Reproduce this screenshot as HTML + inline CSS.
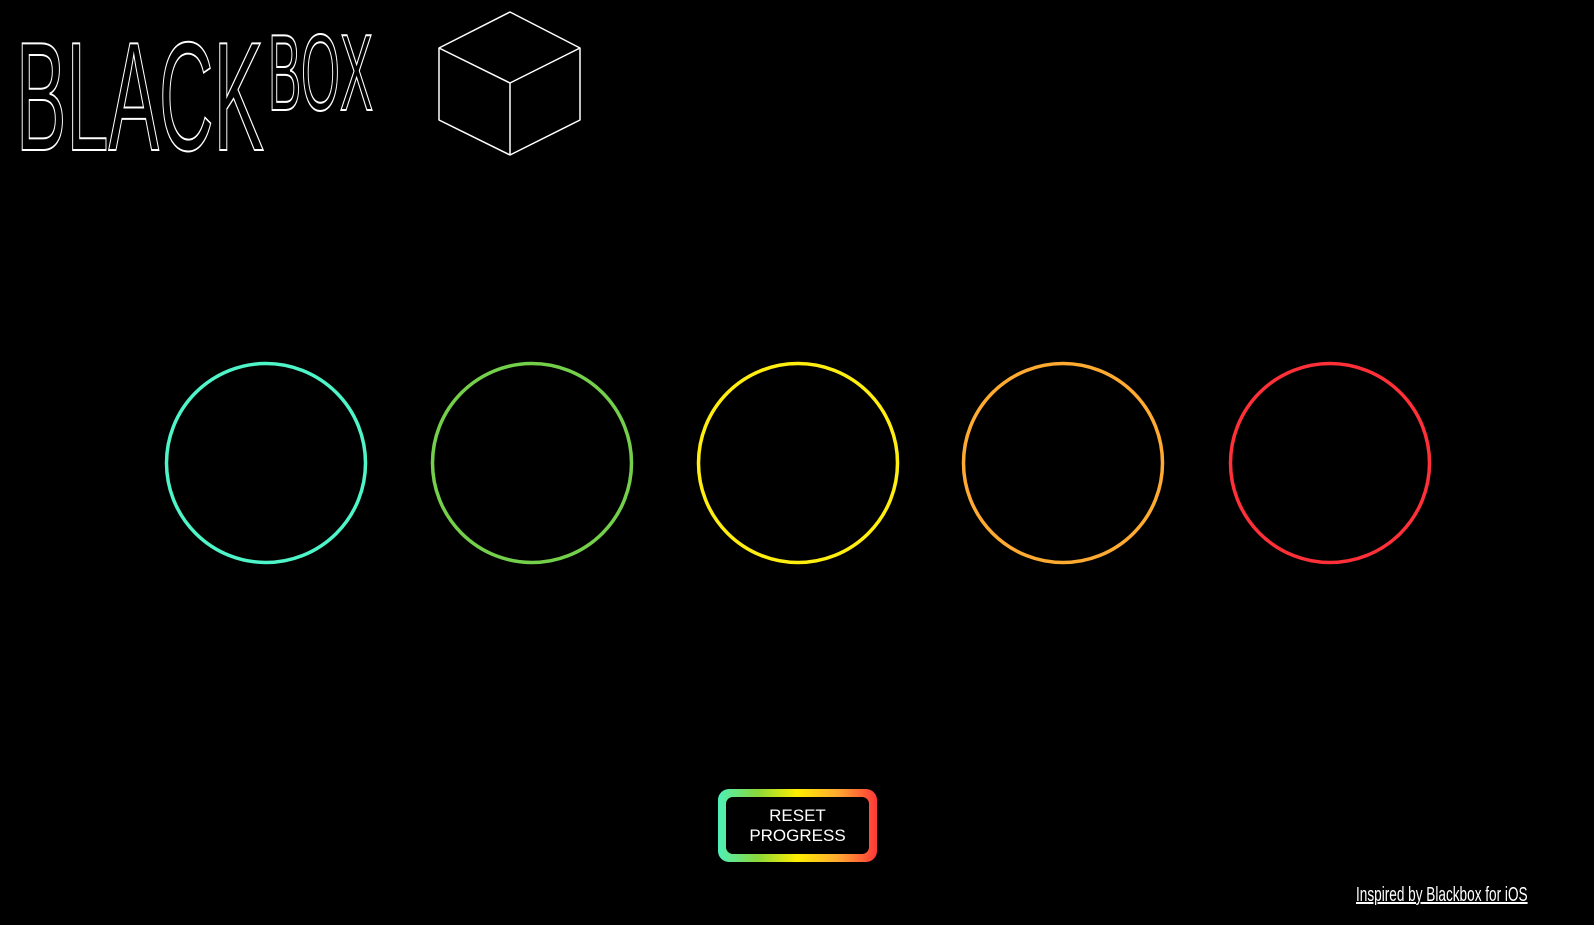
<!DOCTYPE html>
<html><head><meta charset="utf-8"><style>
html,body{margin:0;padding:0;background:#000;width:1594px;height:925px;overflow:hidden}
.btn{position:absolute;left:718px;top:789px;width:159px;height:73px;border-radius:11px;background:linear-gradient(90deg,#4ef0b8,#8ad83a 25%,#ffee00 50%,#ffaa30 75%,#ff3838);}
.btn div{position:absolute;left:8px;top:8px;right:8px;bottom:8px;background:#000;border-radius:7px;color:#fff;font:17px/20px "Liberation Sans",sans-serif;text-align:center;display:flex;align-items:center;justify-content:center}
</style></head><body>
<svg width="1594" height="925" style="position:absolute;left:0;top:0">
<g fill="none" stroke="#fff" stroke-width="2" font-family="Liberation Sans, sans-serif">
<text x="16" y="150" font-size="155" textLength="248" lengthAdjust="spacingAndGlyphs">BLACK</text>
<text x="268" y="110" font-size="109" textLength="105" lengthAdjust="spacingAndGlyphs">BOX</text>
</g>
<g fill="none" stroke="#fff" stroke-width="1.5" stroke-linejoin="round">
<polygon points="510,12 580,48 580,120 510,155 439,120 439,48"/>
<polyline points="439,48 510,83 580,48"/>
<line x1="510" y1="83" x2="510" y2="155"/>
</g>
<g fill="none" stroke-width="3.5">
<circle cx="266" cy="463" r="99.5" stroke="#4ef5c8"/>
<circle cx="532" cy="463" r="99.5" stroke="#74d04a"/>
<circle cx="798" cy="463" r="99.5" stroke="#ffee10"/>
<circle cx="1063" cy="463" r="99.5" stroke="#ffaa30"/>
<circle cx="1330" cy="463" r="99.5" stroke="#ff3038"/>
</g>
</svg>
<div class="btn"><div>RESET<br>PROGRESS</div></div>
<a style="position:absolute;left:1356px;top:883px;color:#fff;font:20px/24px 'Liberation Sans',sans-serif;transform:scaleX(0.68);transform-origin:left top;white-space:nowrap;text-decoration:underline">Inspired by Blackbox for iOS</a>
</body></html>
